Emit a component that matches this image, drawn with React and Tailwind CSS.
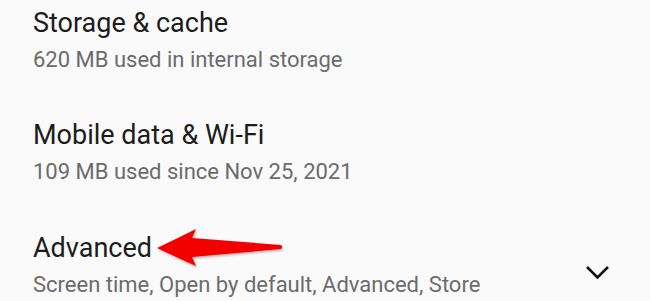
import React from "react";

function Row({ title, subtitle, h, children }) {
  return (
    <div className={`flex justify-between pl-[33px] ${h}`}>
      <div className="pt-[8px]">
        <div className="text-[27px] leading-[30px] text-[#1c1c1c]">{title}</div>
        <div className="mt-[9px] text-[22px] leading-[26px] text-[#6b6b6b]">{subtitle}</div>
      </div>
      {children}
    </div>
  );
}

export default function App() {
  return (
    <div
      className="w-[650px] h-[301px] overflow-hidden bg-[#fafafa] relative"
      style={{ fontFamily: "Roboto, 'Noto Sans', sans-serif" }}
    >
      <Row title="Storage & cache" subtitle="620 MB used in internal storage" h="h-[112px]" />
      <Row title="Mobile data & Wi-Fi" subtitle="109 MB used since Nov 25, 2021" h="h-[113px]" />
      <Row title="Advanced" subtitle="Screen time, Open by default, Advanced, Store" h="h-[76px]">
        <div className="pr-[39px] pt-[40px]">
          <svg width="27" height="16" viewBox="0 0 27 16" className="block">
            <path d="M3 2 L13.5 12.5 L24 2" fill="none" stroke="#111" strokeWidth="2.6" />
          </svg>
        </div>
      </Row>
      <svg
        className="absolute left-0 top-0 pointer-events-none"
        width="650"
        height="301"
        viewBox="0 0 650 301"
      >
        <defs>
          <filter id="sh" x="-10%" y="-30%" width="130%" height="160%">
            <feDropShadow dx="1" dy="1.5" stdDeviation="1.2" floodColor="#000" floodOpacity="0.3" />
          </filter>
        </defs>
        <path
          d="M157 248 Q178 238 196 229 L192 238 L281 245 Q283 247 281 249 L192 257 L196 266 Q178 258 157 248 Z"
          fill="#f20000"
          filter="url(#sh)"
        />
      </svg>
    </div>
  );
}
